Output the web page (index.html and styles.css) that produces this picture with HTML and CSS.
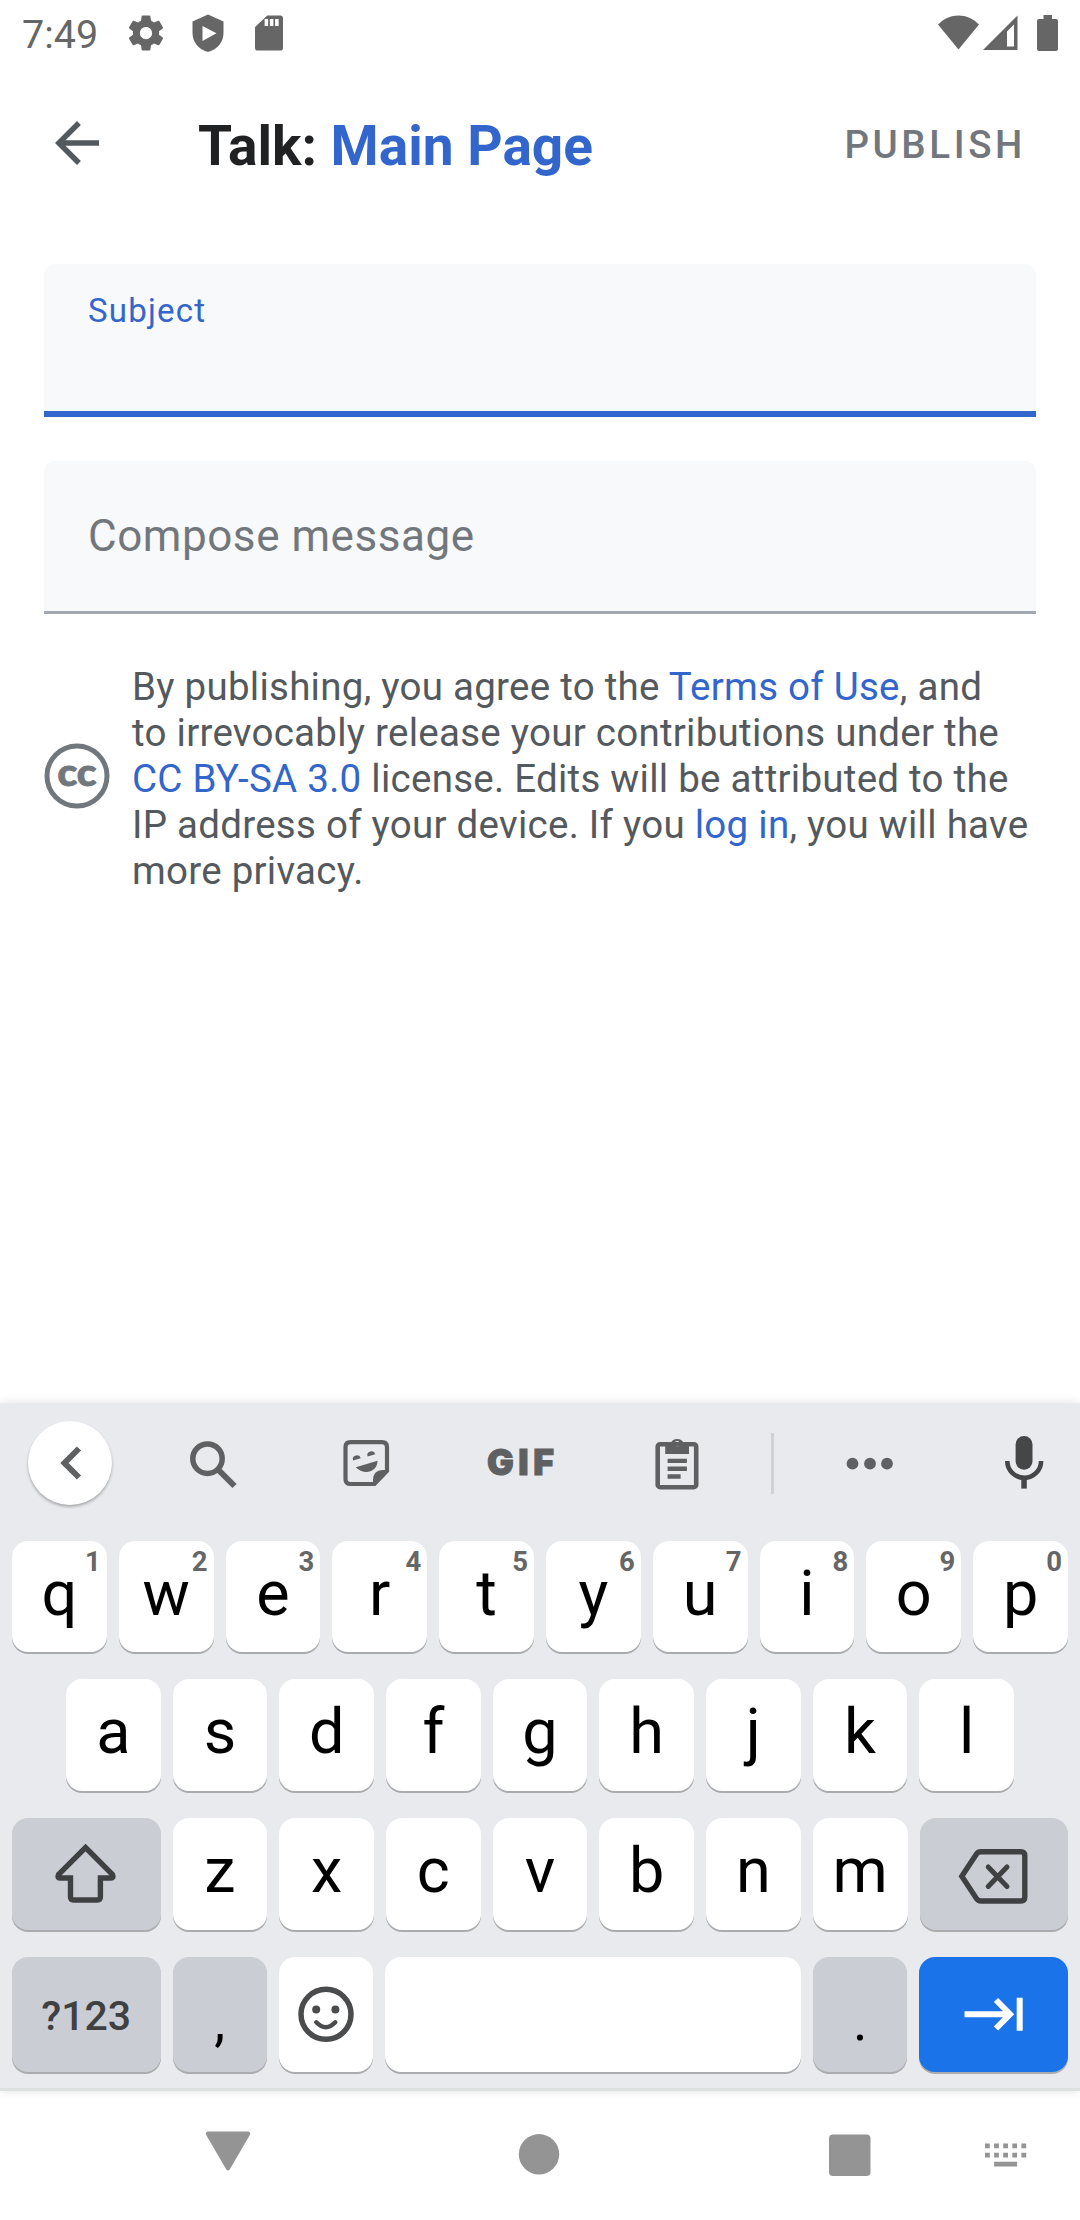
FILE: index.html
```html
<!DOCTYPE html>
<html lang="en">
<head>
<meta charset="utf-8">
<title>Talk: Main Page</title>
<link rel="stylesheet" href="styles.css">
</head>
<body>
<div class="screen">
  <header class="status">
    <span class="clock">7:49</span>
    <div class="status-left">
      <svg width="42" height="42" viewBox="0 0 24 24"><path d="M19.43 12.98c.04-.32.07-.64.07-.98s-.03-.66-.07-.98l2.11-1.65c.19-.15.24-.42.12-.64l-2-3.46c-.12-.22-.39-.3-.61-.22l-2.49 1c-.52-.4-1.08-.73-1.69-.98l-.38-2.65C14.46 2.18 14.25 2 14 2h-4c-.25 0-.46.18-.49.42l-.38 2.65c-.61.25-1.17.59-1.69.98l-2.49-1c-.23-.09-.49 0-.61.22l-2 3.46c-.13.22-.07.49.12.64l2.11 1.65c-.04.32-.07.65-.07.98s.03.66.07.98l-2.11 1.65c-.19.15-.24.42-.12.64l2 3.46c.12.22.39.3.61.22l2.49-1c.52.4 1.08.73 1.69.98l.38 2.65c.03.24.24.42.49.42h4c.25 0 .46-.18.49-.42l.38-2.65c.61-.25 1.17-.59 1.69-.98l2.49 1c.23.09.49 0 .61-.22l2-3.46c.12-.22.07-.49-.12-.64l-2.11-1.65zM12 15.5c-1.93 0-3.5-1.57-3.5-3.5s1.57-3.5 3.5-3.5 3.5 1.57 3.5 3.5-1.57 3.5-3.5 3.5z"/></svg>
      <svg width="42" height="42" viewBox="0 0 42 42"><path fill-rule="evenodd" d="M21 2.5 36.5 9.500V21C36.500 30 30.500 37.500 21 40 11.500 37.500 5.500 30 5.500 21V9.500ZM15.500 14V29L29.500 21.300Z"/></svg>
      <svg width="42" height="42" viewBox="0 0 24 24"><path d="M18.500 2H11L4.020 8.500 4 20.500c0 .9.600 1.500 1.500 1.500h13c.9 0 1.500-.6 1.500-1.500V3.500c0-.9-.6-1.500-1.500-1.500zM11.500 8H9.500V4h2v4zm3 0h-2V4h2v4zm3 0h-2V4h2v4z"/></svg>
    </div>
    <div class="status-right">
      <svg width="41" height="36" viewBox="0 0 41 36"><path d="M20.500 34.500 0 9.500C6 3.500 13 .5 20.500 .5S35 3.500 41 9.500Z"/></svg>
      <svg width="35" height="36" viewBox="0 0 35 36"><path fill-rule="evenodd" d="M0 35 34.500 .5V35ZM24 16.500V31.500H31V9.500Z"/></svg>
      <svg class="battery" width="21" height="36" viewBox="0 0 21 36"><path d="M6.500 0h8.500v4H19q2 0 2 2V34q0 2-2 2H2q-2 0-2-2V6q0-2 2-2H6.500Z"/></svg>
    </div>
  </header>

  <nav class="appbar">
    <svg class="back" width="66" height="66" viewBox="0 0 24 24"><path d="M20 11H7.830l5.590-5.590L12 4l-8 8 8 8 1.410-1.410L7.830 13H20v-2z"/></svg>
    <h1 class="title">Talk: <span class="link">Main Page</span></h1>
    <span class="publish">PUBLISH</span>
  </nav>

  <main class="form">
    <div class="field field-active"><span class="field-label">Subject</span></div>
    <div class="field"><span class="field-hint">Compose message</span></div>
    <div class="license">
      <svg class="cc" width="66" height="66" viewBox="0 0 66 66"><circle cx="33" cy="33" r="30" fill="none" stroke="#72777d" stroke-width="5"/><text class="cc-text" x="13.500" y="43.300" textLength="39" lengthAdjust="spacingAndGlyphs">cc</text></svg>
      <p class="terms">By publishing, you agree to the <span class="link">Terms of Use</span>, and<br>to irrevocably release your contributions under the<br><span class="link">CC BY-SA 3.0</span> license. Edits will be attributed to the<br>IP address of your device. If you <span class="link">log in</span>, you will have<br>more privacy.</p>
    </div>
  </main>

  <section class="keyboard">
    <div class="tools">
      <span class="collapse"><svg width="40" height="40" viewBox="0 0 40 40"><path class="line" stroke-width="6" d="M29 5.500 14.500 20 29 34.500"/></svg></span>
      <svg width="60" height="60" viewBox="0 0 60 60"><circle class="line" cx="24.500" cy="25.700" r="14.700" stroke-width="5.500"/><path class="line" stroke-width="6" d="M35.500 37 51.500 53"/></svg>
      <svg width="60" height="60" viewBox="0 0 60 60"><path class="line" stroke-width="4.200" d="M14.500 9.200H46q5 0 5 5V38L38.500 51H14.500q-5 0-5-5V14.200q0-5 5-5Z"/><path d="M37 52V47q0-9.500 9.500-10H52V39L39 52ZM17 27.500a4 4 0 0 1 7.700-2.200ZM31.500 23.500a4 4 0 0 1 7.700-2.200ZM19.800 34.300 41.500 27.700C41.500 39 28 43 19.800 34.300Z"/></svg>
      <svg width="70" height="60" viewBox="0 0 70 60"><text class="gif" x="2" y="42.300" textLength="67" lengthAdjust="spacing">GIF</text></svg>
      <svg width="60" height="60" viewBox="0 0 60 60"><rect class="line" x="10.700" y="11.200" width="38.500" height="43" rx="2.500" stroke-width="4.600"/><path fill-rule="evenodd" d="M18.200 11H23.500a7 7 0 0 1 13.400 0H42V21H18.200ZM30.200 8a2.800 2.800 0 1 0 .01 0Z"/><path d="M20.600 25.700h19.300v4.400H20.600ZM20.600 33.600h19.300v4.400H20.600ZM20.600 41.300h13v4.400H20.600Z"/></svg>
      <span class="divider"></span>
      <svg width="60" height="60" viewBox="0 0 60 60"><circle cx="12.500" cy="30.700" r="5.900"/><circle cx="30" cy="30.700" r="5.900"/><circle cx="47" cy="30.700" r="5.900"/></svg>
      <svg class="mic" width="60" height="60" viewBox="0 0 60 60"><rect x="21.600" y="3" width="16.900" height="33.700" rx="8.400"/><path d="M27.300 45h5.500v10.600h-5.500Z"/><path class="line" stroke-width="4.600" d="M13.300 28a16.900 16.900 0 0 0 33.800 0"/></svg>
    </div>

    <div class="row row-first">
      <span class="key">q<sup class="alt">1</sup></span><span class="key">w<sup class="alt">2</sup></span><span class="key">e<sup class="alt">3</sup></span><span class="key">r<sup class="alt">4</sup></span><span class="key">t<sup class="alt">5</sup></span><span class="key">y<sup class="alt">6</sup></span><span class="key">u<sup class="alt">7</sup></span><span class="key">i<sup class="alt">8</sup></span><span class="key">o<sup class="alt">9</sup></span><span class="key">p<sup class="alt">0</sup></span>
    </div>
    <div class="row row-inset">
      <span class="key">a</span><span class="key">s</span><span class="key">d</span><span class="key">f</span><span class="key">g</span><span class="key">h</span><span class="key">j</span><span class="key">k</span><span class="key">l</span>
    </div>
    <div class="row">
      <span class="key key-gray key-wide"><svg width="64" height="64" viewBox="0 0 64 64"><path class="line" stroke-width="5.400" d="M31.500 5.500 58.500 32.500Q60 36 57 36H46.400V55Q46.400 58 43.400 58H19.500Q16.500 58 16.500 55V36H6Q3 36 4.500 32.500Z"/></svg></span>
      <span class="key">z</span><span class="key">x</span><span class="key">c</span><span class="key">v</span><span class="key">b</span><span class="key">n</span><span class="key">m</span>
      <span class="key key-gray key-wide"><svg width="72" height="64" viewBox="0 0 72 64"><path class="line" stroke-width="5.400" d="M3.800 34.300 18.500 12Q20 9.800 23 9.800H62.800Q66.800 9.800 66.800 13.800V55Q66.800 59 62.800 59H23Q20 59 18.500 56.600Z"/><path class="line" stroke-linecap="round" stroke-width="5" d="M30.200 25 49 44.400M49 25 30.200 44.400"/></svg></span>
    </div>
    <div class="row row-last">
      <span class="key key-gray key-wide key-text">?123</span>
      <span class="key key-gray key-punct">,</span>
      <span class="key key-icon"><svg class="smile" width="60" height="60" viewBox="0 0 60 60"><circle class="line" cx="30" cy="29.300" r="25" stroke-width="5.500"/><circle cx="20.200" cy="24.500" r="4"/><circle cx="39.400" cy="24.500" r="4"/><path class="line" stroke-linecap="round" stroke-width="4.500" d="M20.300 37.300Q29.800 47 39.300 37.300"/></svg></span>
      <span class="key key-space"></span>
      <span class="key key-gray key-punct">.</span>
      <span class="key key-enter key-wide"><svg width="64" height="64" viewBox="0 0 64 64"><path class="line" stroke-width="6" d="M2.500 31.200H48M34 17 48 31.200 34 45.500M57.700 14.800V47.800"/></svg></span>
    </div>
  </section>

  <footer class="navbar">
    <svg width="60" height="60" viewBox="0 0 60 60"><path d="M10 5.500H50Q53 6 51.800 9L32 43Q30 46 28 43L8.200 9Q7 6 10 5.500Z"/></svg>
    <svg width="60" height="60" viewBox="0 0 60 60"><circle cx="30" cy="28.300" r="20.200"/></svg>
    <svg width="60" height="60" viewBox="0 0 60 60"><rect x="9" y="8.500" width="41.500" height="41.500" rx="4"/></svg>
    <svg width="60" height="60" viewBox="0 0 60 60"><path d="M9 17.500h4.800v4.800H9ZM18.100 17.500h4.800v4.800h-4.800ZM27.200 17.500h4.800v4.800h-4.800ZM36.300 17.500h4.800v4.800h-4.800ZM45.400 17.500h4.800v4.800h-4.800ZM9 26.700h4.800v4.800H9ZM18.100 26.700h4.800v4.800h-4.800ZM27.200 26.700h4.800v4.800h-4.800ZM36.300 26.700h4.800v4.800h-4.800ZM45.400 26.700h4.800v4.800h-4.800ZM18.100 35.700h23v4.800h-23Z"/></svg>
  </footer>
</div>
</body>
</html>
```

FILE: styles.css
```css
* { box-sizing: border-box; }
body { margin: 0; background: #fff; font-family: Roboto, "Liberation Sans", sans-serif; }
svg { display: block; flex: none; }
.line { fill: none; stroke: currentColor; }
.screen { width: 1080px; height: 2220px; display: flex; flex-direction: column; overflow: hidden; }

.status { height: 66px; padding: 0 22px; display: flex; align-items: center; color: #666; fill: #666; }
.clock { width: 103px; font-size: 39.5px; line-height: 46px; padding-top: 3px; }
.status-left { display: flex; gap: 19.5px; }
.status-right { margin-left: auto; display: flex; gap: 3.5px; }
.battery { margin-left: 16px; }

.appbar { height: 154px; padding: 0 54px 0 44px; display: flex; align-items: center; }
.back { fill: #54595d; }
.title { margin: 6px 0 0 88px; font-size: 55px; line-height: 64px; font-weight: 700; color: #202122; white-space: nowrap; }
.link { color: #36c; }
.publish { margin: 3px 0 0 auto; font-size: 38.5px; line-height: 46px; font-weight: 500; letter-spacing: 3.6px; color: #72777d; }

.form { flex: 1; padding: 44px 44px 0; }
.field { height: 153px; margin-bottom: 44px; padding: 0 44px; background: #f8f9fa; border-radius: 11px 11px 0 0; border-bottom: 3px solid #a2a9b1; }
.field-active { border-bottom: 6px solid #36c; }
.field-label, .field-hint { display: block; white-space: nowrap; }
.field-label { padding-top: 27px; font-size: 33px; line-height: 40px; letter-spacing: 1.2px; color: #36c; }
.field-hint { padding-top: 49px; font-size: 44px; line-height: 52px; letter-spacing: .55px; color: #72777d; }
.license { display: flex; align-items: center; gap: 22px; }
.terms { margin: 6px 0 0; font-size: 38.5px; line-height: 46px; letter-spacing: .26px; color: #54595d; white-space: nowrap; }
.cc-text { font-family: Lato, sans-serif; font-weight: 900; font-size: 38.5px; fill: #72777d; stroke: #72777d; stroke-width: 1px; }

.keyboard { height: 688px; padding: 0 12px; background: #e8eaed; border-bottom: 3px solid #dfe1e0; box-shadow: 0 0 9px rgba(0, 0, 0, .12); color: #5f6062; fill: #5f6062; }
.tools { height: 120px; margin: 0 -12px; display: grid; grid-template-columns: 139px 147px 160px 148px 165px 27px 167px 142px; place-items: center; }
.collapse { width: 84px; height: 84px; border-radius: 50%; background: #fff; box-shadow: 0 2px 3px rgba(0, 0, 0, .28); display: flex; align-items: center; justify-content: center; }
.divider { width: 3px; height: 61px; background: #ccd2d6; }
.gif { font-family: Inter, sans-serif; font-weight: 900; font-size: 35.5px; stroke: #5f6062; stroke-width: 1px; }
.mic { color: #444648; fill: #444648; }

.row { display: flex; gap: 12px; height: 112px; margin-bottom: 27px; }
.row-first { height: 111px; margin-top: 18px; }
.row-inset { padding: 0 54px; }
.row-last { height: 115px; margin-bottom: 0; }
.key { position: relative; flex: 1 1 0; border-radius: 16px; background: #fff; box-shadow: 0 2px 0 #a9abad; color: #000; font-size: 63px; line-height: 105px; text-align: center; }
.alt { position: absolute; top: 5px; right: 6px; font-size: 27.5px; line-height: 32px; font-weight: 700; color: #666; }
.key-gray { background: #cbcdd5; }
.key-wide { flex: 0 0 148.500px; display: flex; align-items: center; justify-content: center; color: #3f4042; }
.key-text { padding-top: 2px; font-size: 41px; line-height: 48px; font-weight: 500; }
.key-punct { font-size: 55px; line-height: 129px; }
.key-icon { display: flex; align-items: center; justify-content: center; color: #4a4b4c; }
.smile { fill: #4a4b4c; }
.key-space { flex: 0 0 416px; }
.key-enter { background: #1a73e8; color: #fff; }

.navbar { height: 129px; padding-left: 198px; display: flex; align-items: center; fill: #949494; gap: 251px; }
.navbar svg:last-child { margin-left: -155px; }
```
